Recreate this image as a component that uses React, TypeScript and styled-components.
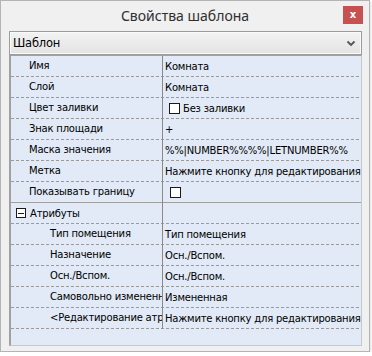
import React from "react";
import styled, { createGlobalStyle } from "styled-components";

const GlobalStyle = createGlobalStyle`
  html, body { margin: 0; padding: 0; background: #ffffff; }
  * { box-sizing: border-box; }
`;

const Window = styled.div`
  width: 370px;
  height: 352px;
  border: 1px solid #b4b4b4;
  background: #f0f0f0;
  display: flex;
  flex-direction: column;
  box-shadow: 1px 1px 2px rgba(0, 0, 0, 0.12);
`;

const TitleBar = styled.div`
  height: 30px;
  display: grid;
  grid-template-columns: 1fr auto 1fr;
  align-items: start;
`;

const Title = styled.div`
  grid-column: 2;
  padding-top: 5px;
  font-family: "Noto Sans", "Open Sans", sans-serif;
  font-size: 14px;
  line-height: 20px;
  color: #2e2e2e;
`;

const CloseButton = styled.div`
  grid-column: 3;
  justify-self: end;
  margin-top: 5px;
  margin-right: 6px;
  width: 20px;
  height: 18px;
  background: #c75050;
  color: #ffffff;
  font-family: "DejaVu Sans", sans-serif;
  font-weight: bold;
  font-size: 10px;
  line-height: 16px;
  display: flex;
  align-items: center;
  justify-content: center;
`;

const Body = styled.div`
  flex: 1;
  display: flex;
  flex-direction: column;
  padding: 0 7px 5px 8px;
`;

const Combo = styled.div`
  height: 24px;
  border: 1px solid #9c9c9c;
  background: linear-gradient(#f3f3f3, #e3e3e3);
  box-shadow: inset 0 0 0 1px #fafafa;
  display: flex;
  align-items: center;
  justify-content: space-between;
  padding: 0 5px 0 3px;
  font-family: "DejaVu Sans", sans-serif;
  font-size: 11.5px;
  letter-spacing: -0.2px;
  color: #000;
`;

const Grid = styled.div`
  flex: 1;
  border-top: 1px solid #a0a0a0;
  border-left: 2px solid #a0a0a0;
  border-right: 1px solid #c8c8c8;
  border-bottom: 1px solid #c8c8c8;
  background: #e1eaf6;
  font-family: "DejaVu Sans", sans-serif;
  font-size: 10px;
  letter-spacing: -0.2px;
  color: #000;
  overflow: hidden;
`;

const Row = styled.div<{ $solid?: boolean }>`
  height: 21px;
  display: grid;
  grid-template-columns: 151px 1px 1fr;
  background-image: ${(p) =>
    p.$solid
      ? "linear-gradient(#a0a0a0, #a0a0a0)"
      : "linear-gradient(to right, #9a9a9a 60%, transparent 60%)"};
  background-size: ${(p) => (p.$solid ? "100% 1px" : "5px 1px")};
  background-repeat: repeat-x;
  background-position: left bottom;
`;

const Label = styled.div<{ $indent: number }>`
  padding-left: ${(p) => p.$indent}px;
  height: 20px;
  line-height: 20px;
  white-space: nowrap;
  overflow: hidden;
`;

const CategoryLabel = styled.div`
  height: 20px;
  display: flex;
  align-items: center;
  gap: 4px;
  padding-left: 5px;
  white-space: nowrap;
`;

const Divider = styled.div`
  background: #8a8a8a;
`;

const Value = styled.div`
  padding-left: 2px;
  height: 20px;
  display: flex;
  align-items: center;
  gap: 3px;
  white-space: nowrap;
  overflow: hidden;
`;

const CheckBox = styled.span<{ $offset?: number }>`
  width: 11px;
  height: 11px;
  border: 1px solid #1a1a1a;
  background: #ffffff;
  margin-left: ${(p) => p.$offset ?? 4}px;
  flex: none;
`;

const Expander = styled.span`
  width: 10px;
  height: 10px;
  border: 1px solid #1a1a1a;
  background: #ffffff;
  display: flex;
  align-items: center;
  justify-content: center;
  flex: none;
  &::after {
    content: "";
    width: 6px;
    height: 1px;
    background: #1a1a1a;
  }
`;

type Item = {
  label: string;
  value: React.ReactNode;
};

const top: Item[] = [
  { label: "Имя", value: "Комната" },
  { label: "Слой", value: "Комната" },
  {
    label: "Цвет заливки",
    value: (
      <>
        <CheckBox $offset={4} />
        <span>Без заливки</span>
      </>
    ),
  },
  { label: "Знак площади", value: "+" },
  { label: "Маска значения", value: "%%|NUMBER%%%%|LETNUMBER%%" },
  { label: "Метка", value: "Нажмите кнопку для редактирования" },
];

const attrs: Item[] = [
  { label: "Тип помещения", value: "Тип помещения" },
  { label: "Назначение", value: "Осн./Вспом." },
  { label: "Осн./Вспом.", value: "Осн./Вспом." },
  { label: "Самовольно измененная", value: "Измененная" },
  { label: "<Редактирование атрибутов>", value: "Нажмите кнопку для редактирования" },
];

const Chevron = () => (
  <svg width="10" height="7" viewBox="0 0 10 7">
    <polyline points="1.5,1.5 5,5 8.5,1.5" fill="none" stroke="#555" strokeWidth="1.8" />
  </svg>
);

export default function App() {
  return (
    <>
      <GlobalStyle />
      <Window>
        <TitleBar>
          <Title>Свойства шаблона</Title>
          <CloseButton>x</CloseButton>
        </TitleBar>
        <Body>
          <Combo>
            <span>Шаблон</span>
            <Chevron />
          </Combo>
          <Grid>
            {top.map((it) => (
              <Row key={it.label}>
                <Label $indent={18}>{it.label}</Label>
                <Divider />
                <Value>{it.value}</Value>
              </Row>
            ))}
            <Row $solid>
              <Label $indent={18}>Показывать границу</Label>
              <Divider />
              <Value>
                <CheckBox $offset={5} />
              </Value>
            </Row>
            <Row>
              <CategoryLabel>
                <Expander />
                <span>Атрибуты</span>
              </CategoryLabel>
              <Divider />
              <Value />
            </Row>
            {attrs.map((it) => (
              <Row key={it.label}>
                <Label $indent={39}>{it.label}</Label>
                <Divider />
                <Value>{it.value}</Value>
              </Row>
            ))}
          </Grid>
        </Body>
      </Window>
    </>
  );
}
